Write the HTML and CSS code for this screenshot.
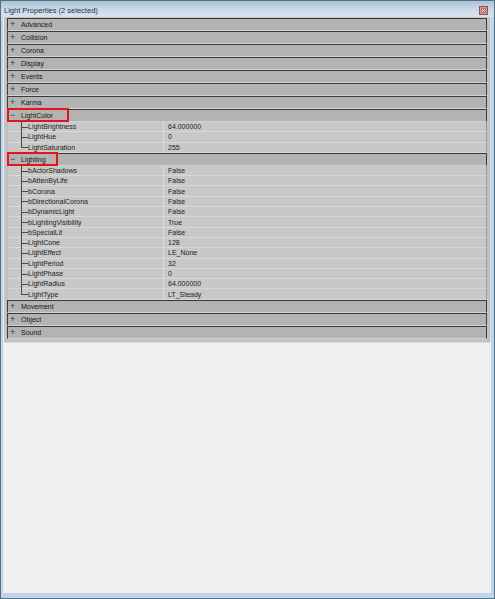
FILE: index.html
```html
<!DOCTYPE html>
<html>
<head>
<meta charset="utf-8">
<title>Light Properties</title>
<link rel="stylesheet" href="styles.css">
</head>
<body>
<div class="window">
  <div class="titlebar">
    <span class="title">Light Properties (2 selected)</span>
    <span class="close"><svg width="9" height="9" viewBox="0 0 9 9"><rect x="0.5" y="0.5" width="8" height="8" fill="#cf9a98" stroke="#8c5250"/><rect x="2" y="2" width="5" height="5" fill="#b96a68"/><path d="M3 3 L6 6 M6 3 L3 6" stroke="#f4e4e4" stroke-width="1"/></svg></span>
  </div>
  <div class="client">
    <div class="grid">
      <div class="cat"><span class="sign">+</span>Advanced</div>
      <div class="cat"><span class="sign">+</span>Collision</div>
      <div class="cat"><span class="sign">+</span>Corona</div>
      <div class="cat"><span class="sign">+</span>Display</div>
      <div class="cat"><span class="sign">+</span>Events</div>
      <div class="cat"><span class="sign">+</span>Force</div>
      <div class="cat"><span class="sign">+</span>Karma</div>
      <div class="cat"><span class="sign">&minus;</span>LightColor<span class="mark mark-color"></span></div>
      <div class="prop"><span class="name">LightBrightness</span><span class="val">64.000000</span></div>
      <div class="prop"><span class="name">LightHue</span><span class="val">0</span></div>
      <div class="prop last"><span class="name">LightSaturation</span><span class="val">255</span></div>
      <div class="cat"><span class="sign">&minus;</span>Lighting<span class="mark mark-lighting"></span></div>
      <div class="prop"><span class="name">bActorShadows</span><span class="val">False</span></div>
      <div class="prop"><span class="name">bAttenByLife</span><span class="val">False</span></div>
      <div class="prop"><span class="name">bCorona</span><span class="val">False</span></div>
      <div class="prop"><span class="name">bDirectionalCorona</span><span class="val">False</span></div>
      <div class="prop"><span class="name">bDynamicLight</span><span class="val">False</span></div>
      <div class="prop"><span class="name">bLightingVisibility</span><span class="val">True</span></div>
      <div class="prop"><span class="name">bSpecialLit</span><span class="val">False</span></div>
      <div class="prop"><span class="name">LightCone</span><span class="val">128</span></div>
      <div class="prop"><span class="name">LightEffect</span><span class="val">LE_None</span></div>
      <div class="prop"><span class="name">LightPeriod</span><span class="val">32</span></div>
      <div class="prop"><span class="name">LightPhase</span><span class="val">0</span></div>
      <div class="prop"><span class="name">LightRadius</span><span class="val">64.000000</span></div>
      <div class="prop last"><span class="name">LightType</span><span class="val">LT_Steady</span></div>
      <div class="cat"><span class="sign">+</span>Movement</div>
      <div class="cat"><span class="sign">+</span>Object</div>
      <div class="cat"><span class="sign">+</span>Sound</div>
    </div>
  </div>
</div>
</body>
</html>
```

FILE: styles.css
```css
html, body {
  margin: 0;
  padding: 0;
  width: 495px;
  height: 599px;
  overflow: hidden;
  font-family: "Liberation Sans", Arial, sans-serif;
  font-size: 7px;
  color: #222;
}

.window {
  box-sizing: border-box;
  width: 495px;
  height: 599px;
  display: flex;
  flex-direction: column;
  background: #c3d4e5;
  border: 1px solid #4f7189;
  padding: 0 3px 5px 2px;
}

.titlebar {
  height: 16px;
  margin: 0 -3px 0 -2px;
  padding: 0 6px 0 3px;
  display: flex;
  align-items: center;
  justify-content: space-between;
  background: linear-gradient(#aec2d5, #cddcec 60%, #d5e3f1);
}

.title {
  font-size: 7.5px;
  color: #1f3247;
  padding-top: 2px;
}

.close {
  display: flex;
  margin-top: 3px;
}

.client {
  flex: 1;
  background: #f0f0f0;
  border-left: 1px solid #e6eef8;
}

.grid {
  background: #c2c2c2;
  padding: 1px 3px 3px 3px;
  border-right: 1px solid #dedede;
  border-bottom: 1px solid #d8d8d8;
}

.cat {
  position: relative;
  box-sizing: border-box;
  height: 13px;
  display: flex;
  align-items: center;
  background: #b3b3b3;
  border-top: 1px solid #3a3a3a;
  border-left: 1px solid #3a3a3a;
  border-right: 1px solid #3a3a3a;
  border-bottom: 1px solid #d2d2d2;
  color: #161616;
}

.sign {
  width: 11px;
  padding-left: 2px;
  font-size: 9px;
  line-height: 9px;
  color: #3a3a3a;
}

.mark {
  position: absolute;
  top: -2px;
  left: -1px;
  height: 14px;
  box-sizing: border-box;
  border: 2px solid #e3141b;
}

.mark-color { width: 62px; }
.mark-lighting { width: 51px; }

.prop {
  position: relative;
  box-sizing: border-box;
  height: 10.3px;
  display: flex;
  align-items: center;
  background: #c8c8c8;
  border-bottom: 1px solid #d8d8d8;
  border-left: 1px solid #bdbdbd;
  border-right: 1px solid #9a9a9a;
}

.name {
  position: relative;
  box-sizing: border-box;
  width: 156px;
  height: 100%;
  padding-left: 20px;
  display: flex;
  align-items: center;
  border-right: 1px solid #dadada;
}

/* tree connector: vertical trunk and horizontal stub */
.name::before {
  content: "";
  position: absolute;
  left: 13px;
  top: -1px;
  bottom: -1px;
  border-left: 1px solid #4a4a4a;
}

.prop.last .name::before {
  bottom: 50%;
}

.name::after {
  content: "";
  position: absolute;
  left: 13px;
  top: 50%;
  width: 7px;
  border-top: 1px solid #4a4a4a;
}

.val {
  padding-left: 4px;
}
```
